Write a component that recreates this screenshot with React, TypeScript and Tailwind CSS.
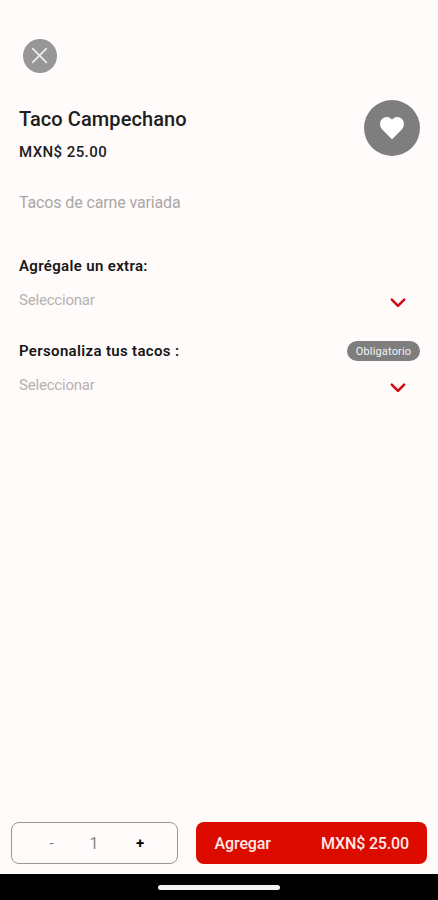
import React from "react";

function Chevron() {
  return (
    <svg width="18" height="12" viewBox="0 0 18 12" fill="none" className="mt-[5px] mr-[13px]">
      <path d="M2.8 2.6L9 8.9L15.2 2.6" stroke="#cf0a12" strokeWidth="2.5" strokeLinecap="round" strokeLinejoin="round" />
    </svg>
  );
}

function OptionGroup({ label, required = false }: { label: string; required?: boolean }) {
  return (
    <section className="h-[85px]">
      <div className="flex h-5 items-center justify-between">
        <h2 className="text-[15px] font-semibold tracking-[0.34px] text-[#171717]">{label}</h2>
        {required && (
          <span className="flex h-5 w-[73px] items-center justify-center rounded-full bg-[#7e7e7e] pt-[2px] text-[11px] tracking-[0.16px] text-[#f4f4f4]">
            Obligatorio
          </span>
        )}
      </div>
      <button className="mt-[14px] flex h-5 w-full items-center justify-between">
        <span className="text-[15px] tracking-[-0.2px] text-[#b5b2b1]">Seleccionar</span>
        <Chevron />
      </button>
    </section>
  );
}

export default function App() {
  return (
    <div className="flex h-[900px] w-[438px] flex-col overflow-hidden bg-[#fffbfa] font-['Roboto',sans-serif]">
      <main className="h-[459px] border-b border-[#fcf7f6] pr-[18px] pl-[19px]">
        <button aria-label="Cerrar" className="mt-[38.5px] ml-[3.5px] flex size-[34px] items-center justify-center rounded-full bg-[#979797]">
          <svg width="17" height="17" viewBox="0 0 17 17">
            <path d="M1.7 1.7L15.3 15.3M15.3 1.7L1.7 15.3" stroke="#ededed" strokeWidth="1.7" strokeLinecap="round" />
          </svg>
        </button>
        <div className="mt-[27.5px] flex h-14 justify-between">
          <div>
            <h1 className="mt-[7px] h-6 text-[20px] leading-6 font-medium tracking-[0.08px] whitespace-nowrap text-[#202020]">Taco Campechano</h1>
            <p className="mt-[11px] h-5 text-[15px] leading-5 font-medium tracking-[0.42px] text-[#202020]">MXN$ 25.00</p>
          </div>
          <button aria-label="Favorito" className="flex size-14 items-center justify-center rounded-full bg-[#7e7e7e]">
            <svg width="26" height="24" viewBox="0 0 26 24" fill="#ffffff">
              <path d="M13 23.2L3.5 13.8C0.5 10.8 0.3 6.2 2.8 3.3C5.3 0.5 9.5 0.5 12 2.7L13 3.6L14 2.7C16.5 0.5 20.7 0.5 23.2 3.3C25.7 6.2 25.5 10.8 22.5 13.8L13 23.2Z" />
            </svg>
          </button>
        </div>
        <p className="mt-[37px] h-5 text-base leading-5 tracking-[-0.13px] text-[#aaa7a6]">Tacos de carne variada</p>
        <div className="mt-[43px]">
          <OptionGroup label="Agrégale un extra:" />
          <OptionGroup label="Personaliza tus tacos :" required />
        </div>
      </main>

      <footer className="mt-auto">
        <div className="flex h-[52px] gap-[18px] pr-[11px] pl-[11px]">
          <div className="grid h-[41.5px] w-[167px] grid-cols-[79px_6px_80px] items-center rounded-lg border border-[#999796] pt-px">
            <button className="text-center text-[15px] text-[#777574]">-</button>
            <span className="flex justify-center pt-px text-base text-[#888584]">1</span>
            <button className="pl-[6px] text-center text-[15px] font-semibold text-black">+</button>
          </div>
          <button className="flex h-[41.5px] w-[231px] items-center justify-between rounded-lg bg-[#dc0b00] pt-[2px] pr-[18px] pl-[18.5px] text-base font-medium text-[#ffe9e6]">
            <span className="tracking-[-0.1px]">Agregar</span>
            <span className="tracking-[-0.15px]">MXN$ 25.00</span>
          </button>
        </div>
        <div className="flex h-[26px] justify-center bg-black pt-[10.5px]">
          <div className="h-[5px] w-[122px] rounded-full bg-[#f3f3f3]" />
        </div>
      </footer>
    </div>
  );
}
